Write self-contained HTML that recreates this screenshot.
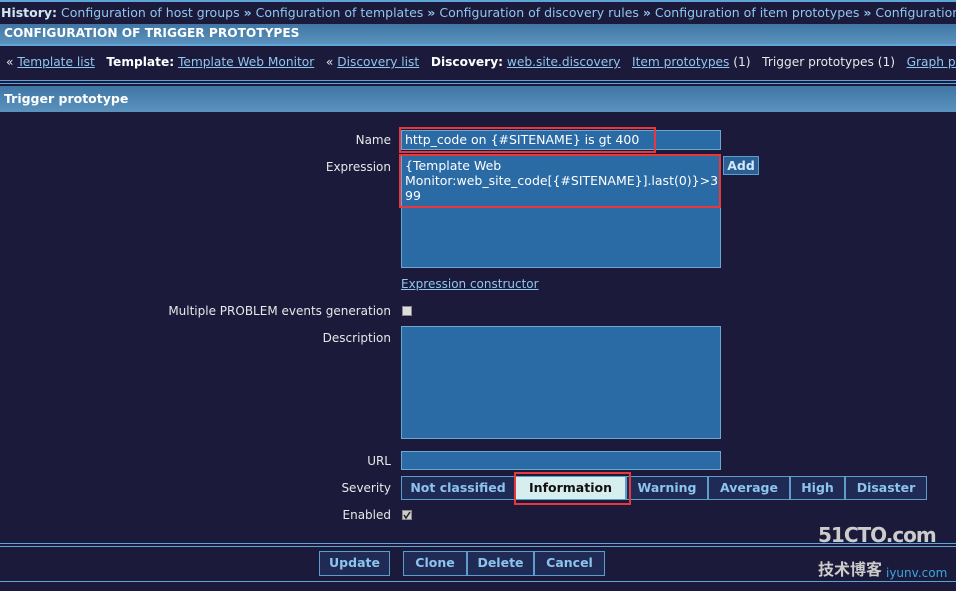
<!DOCTYPE html><html><head><style>
body{margin:0;width:956px;height:591px;overflow:hidden;background:#1b1a3a;font-family:"DejaVu Sans","Liberation Sans",sans-serif;font-size:12px;color:#e8e8e8;position:relative}
.a{position:absolute;white-space:nowrap}
.bar{position:absolute;left:0;width:956px;background:linear-gradient(#3f76a3,#5b92bd)}
.ln{position:absolute;left:0;width:956px;height:2px;background:#5fa4d8}
a{color:#8fc6f0;text-decoration:underline}
.lab{position:absolute;right:565px;text-align:right;white-space:nowrap;color:#e8e8e8}
.in{position:absolute;background:#2a6aa5;border:1px solid #6fa6d0;box-sizing:border-box}
.red{position:absolute;border:2px solid #e8383c;box-sizing:border-box}
.btn{position:absolute;border:1px solid #5e9ccc;background:#1f2b55;color:#8cc4ee;font-weight:bold;text-align:center;box-sizing:border-box;line-height:22px;font-size:12.5px}
.cb{position:absolute;width:10px;height:10px;background:#ddd;border:1px solid #888;box-sizing:border-box}
</style></head><body>
<div class="ln" style="top:0;height:2px"></div>
<div class="a" style="left:1px;top:5px;color:#8fc6f0;font-size:12.5px;width:955px;overflow:hidden"><b style="color:#cfe6f7">History:</b> Configuration of host groups <b>»</b> Configuration of templates <b>»</b> Configuration of discovery rules <b>»</b> Configuration of item prototypes <b>»</b> Configuration of trigger prototypes</div>
<div class="bar" style="top:24px;height:20px"></div>
<div class="a" style="left:4px;top:26px;font-weight:bold;color:#fff;font-size:12.2px">CONFIGURATION OF TRIGGER PROTOTYPES</div>
<div class="ln" style="top:44px;height:2px"></div>
<div class="a" style="left:6px;top:55px;font-size:12.2px;width:950px;overflow:hidden">« <a>Template list</a> &nbsp;&nbsp;<b style="color:#fff">Template:</b> <a>Template Web Monitor</a> &nbsp;&nbsp;« <a>Discovery list</a> &nbsp;&nbsp;<b style="color:#fff">Discovery:</b> <a>web.site.discovery</a> &nbsp;&nbsp;<a>Item prototypes</a> (1) &nbsp;&nbsp;Trigger prototypes (1) &nbsp;&nbsp;<a>Graph prototypes</a></div>
<div class="ln" style="top:80px;height:1px"></div>
<div class="ln" style="top:83px;height:1px"></div>
<div class="bar" style="top:86px;height:26px"></div>
<div class="a" style="left:4px;top:91px;font-weight:bold;color:#fff;font-size:12.5px">Trigger prototype</div>

<div class="lab" style="top:133px">Name</div>
<div class="in" style="left:401px;top:130px;width:320px;height:20px"></div>
<div class="a" style="left:405px;top:132px;color:#fff;font-size:12.5px">http_code on {#SITENAME} is gt 400</div>
<div class="red" style="left:399px;top:127px;width:257px;height:26px"></div>

<div class="lab" style="top:160px">Expression</div>
<div class="in" style="left:401px;top:155px;width:320px;height:113px"></div>
<div class="a" style="left:405px;top:158px;color:#fff;line-height:15px;font-size:12.5px">{Template Web<br>Monitor:web_site_code[{#SITENAME}].last(0)}&gt;3<br>99</div>
<div class="red" style="left:399px;top:154px;width:322px;height:54px"></div>
<div class="btn" style="left:723px;top:156px;width:36px;height:19px;line-height:17px;color:#cfe8fa;background:#2a5f95">Add</div>
<div class="a" style="left:401px;top:277px"><a>Expression constructor</a></div>

<div class="lab" style="top:304px">Multiple PROBLEM events generation</div>
<div class="cb" style="left:402px;top:306px"></div>
<div class="lab" style="top:331px">Description</div>
<div class="in" style="left:401px;top:326px;width:320px;height:113px"></div>
<div class="lab" style="top:454px">URL</div>
<div class="in" style="left:401px;top:451px;width:320px;height:19px"></div>

<div class="lab" style="top:481px">Severity</div>
<div class="btn" style="left:401px;top:476px;width:114px;height:24px">Not classified</div>
<div class="btn" style="left:515px;top:476px;width:111px;height:24px;background:#d6eeee;color:#111">Information</div>
<div class="btn" style="left:626px;top:476px;width:82px;height:24px">Warning</div>
<div class="btn" style="left:708px;top:476px;width:82px;height:24px">Average</div>
<div class="btn" style="left:790px;top:476px;width:55px;height:24px">High</div>
<div class="btn" style="left:845px;top:476px;width:82px;height:24px">Disaster</div>
<div class="red" style="left:514px;top:472px;width:117px;height:33px"></div>

<div class="lab" style="top:508px">Enabled</div>
<div class="cb" style="left:402px;top:510px;background:#ccc">
<svg width="8" height="8" style="position:absolute;left:0;top:0"><path d="M1 4 L3 7 L7 1" stroke="#222" stroke-width="1.5" fill="none"/></svg></div>

<div class="ln" style="top:543px;height:1px"></div>
<div class="ln" style="top:546px;height:1px"></div>
<div class="btn" style="left:319px;top:551px;width:71px;height:25px">Update</div>
<div class="btn" style="left:403px;top:551px;width:64px;height:25px">Clone</div>
<div class="btn" style="left:467px;top:551px;width:67px;height:25px">Delete</div>
<div class="btn" style="left:534px;top:551px;width:71px;height:25px">Cancel</div>
<div class="ln" style="top:581px;height:1px"></div>
<div class="a" style="left:818px;top:523px;font-size:20px;font-weight:bold;color:#ccc;letter-spacing:-1px">51CTO.com</div>
<div class="a" style="left:818px;top:556px;font-size:16px;font-weight:bold;color:#ccc;font-family:'Noto Sans CJK SC',sans-serif">技术博客</div>
<div class="a" style="left:886px;top:566px;font-size:12px;color:#39a6e0">iyunv.com</div>
</body></html>
